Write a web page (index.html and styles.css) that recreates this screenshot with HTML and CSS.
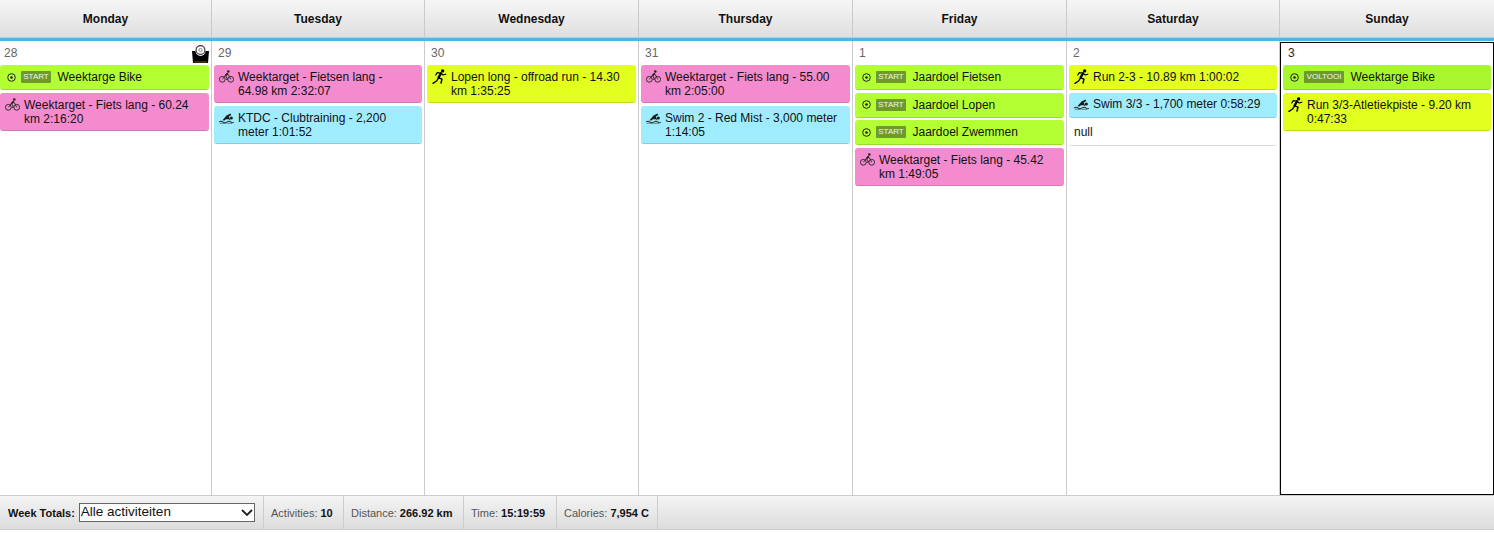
FILE: index.html
```html
<!DOCTYPE html>
<html lang="nl">
<head>
<meta charset="utf-8">
<title>Week calendar</title>
<link rel="stylesheet" href="styles.css">
</head>
<body>
<svg class="defs" width="0" height="0" aria-hidden="true">
  <defs>
    <symbol id="bike" viewBox="0 0 15 13">
      <g fill="none" stroke="#222" stroke-width=".9">
        <circle cx="3.300" cy="9.300" r="2.900"/>
        <circle cx="11.700" cy="9.300" r="2.900"/>
        <path d="M3.300 9.300 6.400 5.500 8.600 9.300H6.800M6.400 5.500l1.200-1.800 2.200 1.600 1.900 4"/>
      </g>
      <path d="M5.500 5.500 8.200 2.800 9.500 4 7.500 6Z" fill="#222"/>
      <circle cx="9.300" cy="1.500" r="1.300" fill="#222"/>
    </symbol>
    <symbol id="swim" viewBox="0 0 15 11">
      <path d="M3.500 7.300 7.500 2.500 11.500.5 12.300 2 9.800 3.500 11.300 7.300 9.500 6.300 7 6.200 5.500 7.500Z" fill="#1c1c1c"/>
      <circle cx="12.300" cy="5" r="1.600" fill="#1c1c1c"/>
      <path d="M0 9c1.500-1 2.500-1 4 0s2.500 1 4 0 2.500-1 4 0 2 .8 3 .2" fill="none" stroke="#1c1c1c" stroke-width="1"/>
      <path d="M1 10.600c1.500-.7 2.500-.7 4 0s2.500.7 4 0 2.500-.7 4 0" fill="none" stroke="#444" stroke-width=".7"/>
    </symbol>
    <symbol id="run" viewBox="0 0 15 15">
      <circle cx="10.600" cy="1.900" r="1.700" fill="#000"/>
      <g fill="none" stroke="#000" stroke-linecap="round" stroke-linejoin="round">
        <path d="M9 4.200 6.600 8.600" stroke-width="2.300"/>
        <path d="M9 4.200 11.200 6 13.800 5.200M8.500 4 5.300 3.700 3.800 6" stroke-width="1.200"/>
        <path d="M6.600 8.800 10 10.200 9 14M6.600 8.800 4.600 12 1 14.300" stroke-width="1.400"/>
      </g>
    </symbol>
    <symbol id="target" viewBox="0 0 9 9">
      <circle cx="4.500" cy="4.500" r="3.800" fill="none" stroke="#222" stroke-width="1"/>
      <circle cx="4.500" cy="4.500" r="1.300" fill="#222"/>
    </symbol>
  </defs>
</svg>
<main class="calendar">
  <div class="head-row">
    <div class="head-cell">Monday</div>
    <div class="head-cell">Tuesday</div>
    <div class="head-cell">Wednesday</div>
    <div class="head-cell">Thursday</div>
    <div class="head-cell">Friday</div>
    <div class="head-cell">Saturday</div>
    <div class="head-cell head-last">Sunday</div>
  </div>
  <div class="week">
    <section class="day day-first">
      <div class="date">28
        <svg class="scale" viewBox="0 0 17 18" aria-hidden="true">
          <path d="M0 6h3.500a5 5 0 0 0 10 0H17L16 18H1Z" fill="#000"/>
          <path d="M2 17h13" stroke="#7a5518" stroke-width="1"/>
          <circle cx="8.500" cy="5" r="4.400" fill="#fff" stroke="#333" stroke-width="1.100"/>
          <circle cx="8.500" cy="5" r="1.600" fill="none" stroke="#666" stroke-width=".8"/>
        </svg>
      </div>
      <div class="goal green"><svg class="ti"><use href="#target"/></svg><span class="tag">START</span><span>Weektarge Bike</span></div>
      <div class="ev pink"><svg class="ic ic-bike"><use href="#bike"/></svg><span>Weektarget - Fiets lang - 60.24 km 2:16:20</span></div>
    </section>
    <section class="day">
      <div class="date">29</div>
      <div class="ev pink"><svg class="ic ic-bike"><use href="#bike"/></svg><span>Weektarget - Fietsen lang - 64.98 km 2:32:07</span></div>
      <div class="ev blue"><svg class="ic ic-swim"><use href="#swim"/></svg><span>KTDC - Clubtraining - 2,200 meter 1:01:52</span></div>
    </section>
    <section class="day">
      <div class="date">30</div>
      <div class="ev yellow"><svg class="ic ic-run"><use href="#run"/></svg><span>Lopen long - offroad run - 14.30 km 1:35:25</span></div>
    </section>
    <section class="day">
      <div class="date">31</div>
      <div class="ev pink"><svg class="ic ic-bike"><use href="#bike"/></svg><span>Weektarget - Fiets lang - 55.00 km 2:05:00</span></div>
      <div class="ev blue"><svg class="ic ic-swim"><use href="#swim"/></svg><span>Swim 2 - Red Mist - 3,000 meter 1:14:05</span></div>
    </section>
    <section class="day">
      <div class="date">1</div>
      <div class="goal green"><svg class="ti"><use href="#target"/></svg><span class="tag">START</span><span>Jaardoel Fietsen</span></div>
      <div class="goal green"><svg class="ti"><use href="#target"/></svg><span class="tag">START</span><span>Jaardoel Lopen</span></div>
      <div class="goal green"><svg class="ti"><use href="#target"/></svg><span class="tag">START</span><span>Jaardoel Zwemmen</span></div>
      <div class="ev pink"><svg class="ic ic-bike"><use href="#bike"/></svg><span>Weektarget - Fiets lang - 45.42 km 1:49:05</span></div>
    </section>
    <section class="day">
      <div class="date">2</div>
      <div class="ev yellow"><svg class="ic ic-run"><use href="#run"/></svg><span>Run 2-3 - 10.89 km 1:00:02</span></div>
      <div class="ev ev-tight blue"><svg class="ic ic-swim"><use href="#swim"/></svg><span>Swim 3/3 - 1,700 meter 0:58:29</span></div>
      <div class="note">null</div>
    </section>
    <section class="day today">
      <div class="date">3</div>
      <div class="goal lime"><svg class="ti"><use href="#target"/></svg><span class="tag tag-done">VOLTOOI</span><span>Weektarge Bike</span></div>
      <div class="ev yellow"><svg class="ic ic-run"><use href="#run"/></svg><span>Run 3/3-Atletiekpiste - 9.20 km 0:47:33</span></div>
    </section>
  </div>
  <footer class="totals">
    <div class="cell cell-select">
      <b class="totals-label">Week Totals:</b>
      <div class="filter-wrap">
        <select class="filter"><option>Alle activiteiten</option></select>
        <svg class="chevron" viewBox="0 0 12 7" aria-hidden="true"><path d="M1 1l5 5 5-5" fill="none" stroke="#222" stroke-width="1.800"/></svg>
      </div>
    </div>
    <div class="cell cell-act">Activities: <b>10</b></div>
    <div class="cell cell-dist">Distance: <b>266.92 km</b></div>
    <div class="cell cell-time">Time: <b>15:19:59</b></div>
    <div class="cell cell-cal">Calories: <b>7,954 C</b></div>
  </footer>
</main>
</body>
</html>
```

FILE: styles.css
```css
* { box-sizing: border-box; }
html, body { margin: 0; padding: 0; background: #fff; }
body { font-family: "Liberation Sans", Arial, sans-serif; font-size: 12px; color: #111; height: 533px; overflow: hidden; }
.defs { position: absolute; }
.calendar { display: flex; flex-direction: column; height: 530px; border-bottom: 1px solid #ccc; }

.head-row, .week { display: grid; grid-template-columns: 212px 213px 214px 214px 214px 213px 214px; }
.head-row { height: 41px; border-bottom: 3px solid #4fb6e3; background: linear-gradient(#f6f6f6, #dedede); box-shadow: inset 0 -1px #a3d9ef; }
.head-cell { display: flex; align-items: center; justify-content: center; font-weight: bold; font-size: 12px; border-right: 1px solid #c9c9c9; padding-bottom: 1px; }
.head-last { border-right: 0; }

.week { flex: 1; min-height: 0; }
.day { border-right: 1px solid #ccc; padding: 0 2px; min-width: 0; }
.day-first { padding-left: 0; }
.today { border: 1px solid #000; margin-top: 1px; padding: 0 2px; }
.date { position: relative; height: 24px; padding: 5px 0 0 4px; line-height: 14px; color: #666; }
.today .date { color: #222; height: 22px; padding-top: 3px; padding-left: 5px; }
.scale { position: absolute; right: 0; top: 4px; width: 17px; height: 18px; }

.ev, .goal, .note { border-radius: 3px; border-bottom: 1px solid rgba(0,0,0,.14); line-height: 14px; }
.ev { display: flex; gap: 4px; min-height: 25px; margin-bottom: 3px; padding: 5px 5px 4px; }
.ev-tight { padding-top: 4px; }
.ev > span { padding-right: 2px; }
.goal { display: flex; align-items: center; height: 25px; margin-bottom: 2.700px; padding: 0 0 0 7px; }
.goal > span:last-child { margin-left: 6.500px; }
.green { background: #b4ff33; }
.lime { background: #a8f62e; }
.pink { background: #f48bce; }
.blue { background: #a0ecff; }
.yellow { background: #e2ff1e; }
.note { background: #fff; height: 25px; padding: 4px 5px; }

.ic { flex: none; display: block; }
.ic-bike { width: 15px; height: 13px; }
.ic-swim { width: 15px; height: 11px; margin-top: 2px; }
.ev-tight .ic-swim { margin-top: 2px; }
.ic-run { width: 15px; height: 15px; margin-top: -1px; }
.ti { width: 9px; height: 9px; flex: none; margin-right: 5px; }
.tag { background: #6f9a2b; color: #f0f7e4; font-size: 8px; line-height: 12px; height: 12px; width: 30px; text-align: center; border-radius: 1px; flex: none; }
.tag-done { width: 40px; }

.totals { display: flex; height: 34px; flex: none; background: linear-gradient(#f4f4f4, #dcdcdc); border-top: 1px solid #ccc; font-size: 11px; color: #555; }
.totals b { color: #111; }
.cell { display: flex; align-items: center; gap: 3px; border-right: 1px solid #ccc; padding-left: 7px; }
.cell-select { width: 264px; padding-left: 8px; }
.filter-wrap { position: relative; margin-left: 1px; }
.filter { display: block; width: 176px; height: 19px; font: 13.500px "Liberation Sans", Arial, sans-serif; color: #111; background: #fff; border: 1px solid #666; border-radius: 0; padding: 0 0 2px 1px; appearance: none; }
.chevron { position: absolute; right: 2px; top: 6px; width: 12px; height: 7px; pointer-events: none; }
.cell-act { width: 80px; }
.cell-dist { width: 120px; }
.cell-time { width: 93px; }
.cell-cal { width: 101px; }
```
